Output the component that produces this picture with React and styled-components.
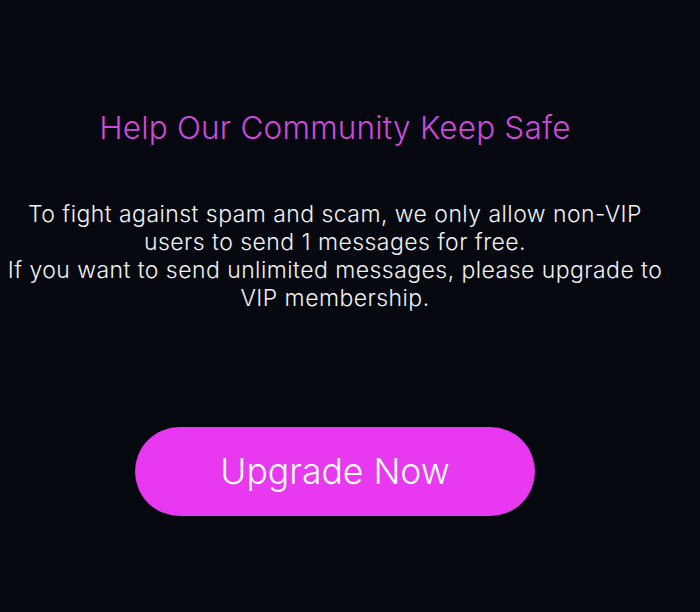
import React from "react";
import styled, { createGlobalStyle } from "styled-components";

const Global = createGlobalStyle`
  html, body {
    margin: 0;
    padding: 0;
    background: #05080f;
  }
  body {
    font-family: Inter, "Open Sans", sans-serif;
    -webkit-font-smoothing: antialiased;
  }
`;

const Screen = styled.main`
  width: 700px;
  height: 612px;
  background: #05080f;
  display: flex;
  flex-direction: column;
  align-items: center;
  box-sizing: border-box;
  padding: 108px 30px 0 0;
`;

const Title = styled.h1`
  margin: 0;
  font-size: 31.5px;
  font-weight: 300;
  line-height: 40px;
  color: #d048da;
  letter-spacing: 0.2px;
`;

const Message = styled.p`
  margin: 52px 0 0;
  width: 668px;
  text-align: center;
  font-size: 23px;
  font-weight: 300;
  line-height: 28px;
  color: #f2f2f4;
  letter-spacing: 0.45px;
`;

const UpgradeButton = styled.button`
  margin-top: 115px;
  width: 400px;
  height: 89px;
  border: none;
  border-radius: 45px;
  background: #e838f0;
  color: #fff;
  font-family: Inter, "Open Sans", sans-serif;
  font-size: 35.5px;
  font-weight: 300;
  cursor: pointer;
`;

export default function App() {
  return (
    <>
      <Global />
      <Screen>
        <Title>Help Our Community Keep Safe</Title>
        <Message>
          To fight against spam and scam, we only allow non-VIP users to send 1
          messages for free.
          <br />
          If you want to send unlimited messages, please upgrade to VIP
          membership.
        </Message>
        <UpgradeButton>Upgrade Now</UpgradeButton>
      </Screen>
    </>
  );
}
